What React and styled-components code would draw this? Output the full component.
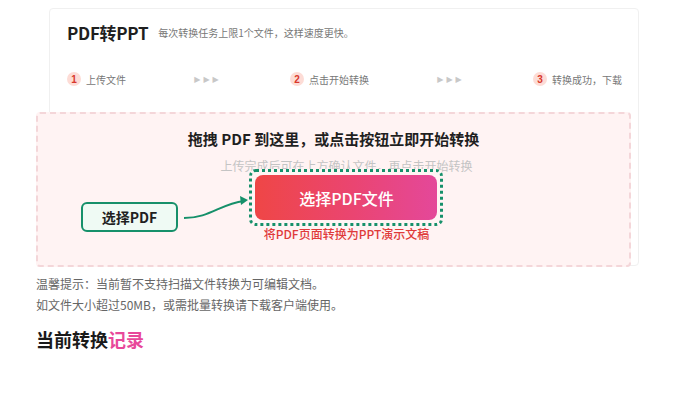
import React from "react";
import styled, { createGlobalStyle } from "styled-components";

const Global = createGlobalStyle`
  html, body { margin: 0; padding: 0; background: #fff; }
  body { font-family: "Noto Sans CJK SC", "Noto Sans", sans-serif; color: #222; }
`;

const Page = styled.div`
  width: 603px;
  padding: 8px 0 0 36px;
`;

const Card = styled.section`
  position: relative;
  margin-left: 13px;
  border: 1px solid #f0f0f0;
  border-radius: 4px;
  height: 258px;
  box-sizing: border-box;
`;

const Header = styled.div`
  padding: 10px 16px 0 17px;
  height: 103px;
  box-sizing: border-box;
`;

const TitleRow = styled.div`
  display: flex;
  align-items: center;
  gap: 10px;
  height: 26px;
`;

const Title = styled.h1`
  margin: 0;
  font-size: 17px;
  font-weight: 700;
  color: #1f1f1f;
  letter-spacing: -0.3px;
`;

const Sub = styled.span`
  font-size: 10px;
  color: #777;
`;

const Steps = styled.div`
  display: flex;
  align-items: center;
  justify-content: space-between;
  margin-top: 26px;
  height: 16px;
`;

const Step = styled.div`
  display: flex;
  align-items: center;
  gap: 5px;
  font-size: 10px;
  color: #777;
`;

const Badge = styled.span`
  width: 14px;
  height: 14px;
  border-radius: 50%;
  background: #fddcd6;
  color: #d8382c;
  font-size: 10px;
  font-weight: 700;
  font-family: "Liberation Sans", sans-serif;
  display: inline-flex;
  align-items: center;
  justify-content: center;
`;

const Arrows = styled.span`
  color: #c8c8c8;
  font-size: 8px;
  letter-spacing: 3px;
  font-family: "DejaVu Sans", sans-serif;
`;

const Drop = styled.div`
  position: relative;
  margin: 0 7px 0 -14px;
  height: 155px;
  box-sizing: border-box;
  border: 2px dashed #f4d6d9;
  border-radius: 4px;
  background: #fff3f3;
  display: flex;
  flex-direction: column;
  align-items: center;
  padding-top: 15px;
`;

const DropTitle = styled.div`
  font-size: 15px;
  font-weight: 700;
  line-height: 20px;
  color: #1f1f1f;
`;

const Column = styled.div`
  margin-left: 26px;
  display: flex;
  flex-direction: column;
  align-items: center;
`;

const Hint = styled.div`
  margin-top: 9px;
  font-size: 12px;
  line-height: 16px;
  color: #c4c4c4;
`;

const Frame = styled.div`
  margin-top: -5px;
  padding: 3px;
  border: 3px dotted #16906a;
  border-radius: 7px;
  background: #fff4f4;
`;

const Button = styled.button`
  width: 182px;
  height: 45px;
  border: none;
  border-radius: 8px;
  background: linear-gradient(90deg, #ef4646 0%, #ea4572 55%, #e4489a 100%);
  color: #fff;
  font-family: inherit;
  font-size: 16px;
  font-weight: 500;
  display: block;
`;

const Note = styled.div`
  margin-top: 1px;
  font-size: 12px;
  line-height: 14px;
  font-weight: 500;
  color: #e03a3a;
`;

const Label = styled.div`
  position: absolute;
  left: 43px;
  top: 88px;
  width: 97px;
  height: 30px;
  box-sizing: border-box;
  border: 2px solid #16906a;
  border-radius: 6px;
  background: #effaf4;
  display: flex;
  align-items: center;
  justify-content: center;
  font-size: 14px;
  font-weight: 700;
  color: #1f1f1f;
`;

const Connector = styled.svg`
  position: absolute;
  left: 144px;
  top: 76px;
`;

const Tips = styled.div`
  margin-top: 7px;
  font-size: 12px;
  line-height: 21px;
  color: #666;
`;

const Records = styled.h2`
  margin: 11px 0 0;
  font-size: 18px;
  font-weight: 700;
  color: #1a1a1a;
  span { color: #e8489a; }
`;

export default function App() {
  return (
    <>
      <Global />
      <Page>
        <Card>
          <Header>
            <TitleRow>
              <Title>PDF转PPT</Title>
              <Sub>每次转换任务上限1个文件，这样速度更快。</Sub>
            </TitleRow>
            <Steps>
              <Step><Badge>1</Badge>上传文件</Step>
              <Arrows>▶▶▶</Arrows>
              <Step><Badge>2</Badge>点击开始转换</Step>
              <Arrows>▶▶▶</Arrows>
              <Step><Badge>3</Badge>转换成功，下载</Step>
            </Steps>
          </Header>
          <Drop>
            <DropTitle>拖拽 PDF 到这里，或点击按钮立即开始转换</DropTitle>
            <Column>
              <Hint>上传完成后可在上方确认文件，再点击开始转换</Hint>
              <Frame>
                <Button>选择PDF文件</Button>
              </Frame>
              <Note>将PDF页面转换为PPT演示文稿</Note>
            </Column>
            <Label>选择PDF</Label>
            <Connector width="70" height="40" viewBox="0 0 70 40">
              <path d="M2 28 C 28 28, 38 14, 62 11" fill="none" stroke="#16906a" strokeWidth="2" />
              <path d="M66 10 L58 6 L59 15 Z" fill="#16906a" />
            </Connector>
          </Drop>
        </Card>
        <Tips>
          <div>温馨提示：当前暂不支持扫描文件转换为可编辑文档。</div>
          <div>如文件大小超过50MB，或需批量转换请下载客户端使用。</div>
        </Tips>
        <Records>当前转换<span>记录</span></Records>
      </Page>
    </>
  );
}
